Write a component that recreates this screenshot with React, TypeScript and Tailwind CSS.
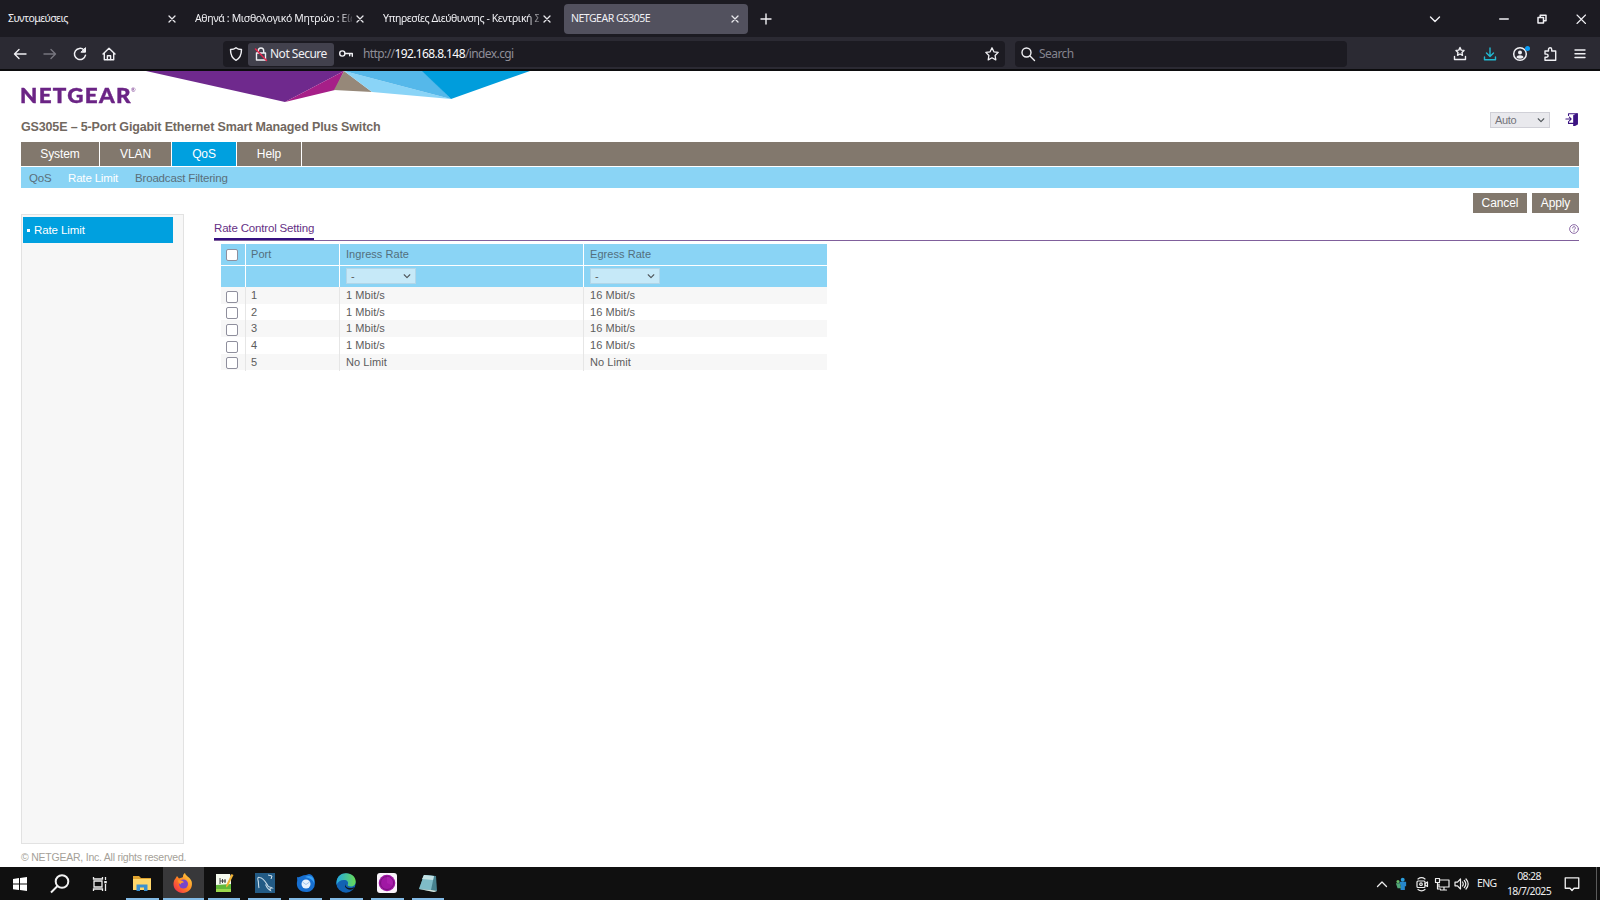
import type { ReactNode } from "react";

const ui = "font-['Noto_Sans','Open_Sans',sans-serif]";

function Icon({ size = 16, sw = 1.4, className = "", children }: { size?: number; sw?: number; className?: string; children: ReactNode }) {
  return (
    <svg width={size} height={size} viewBox="0 0 16 16" fill="none" stroke="currentColor" strokeWidth={sw} strokeLinecap="round" strokeLinejoin="round" className={`shrink-0 ${className}`}>
      {children}
    </svg>
  );
}

function Cross() {
  return (
    <Icon size={16} sw={1.3} className="text-[#e8e8ec]">
      <path d="M5 5l6 6M11 5l-6 6" />
    </Icon>
  );
}

function TabBar() {
  return (
    <div className={`flex h-[37px] shrink-0 items-center bg-[#1c1b22] text-[10.5px] text-[#f0f0f4] ${ui}`}>
      <div className="flex w-[187px] items-center pl-2">
        <span className="w-[156px] whitespace-nowrap tracking-[-0.5px]">Συντομεύσεις</span>
        <Cross />
      </div>
      <div className="flex w-[188px] items-center pl-2">
        <span className="w-[157px] whitespace-nowrap tracking-[-0.34px] [mask-image:linear-gradient(to_right,#000_92%,transparent_102%)]">Αθηνά : Μισθολογικό Μητρώο : Είς</span>
        <Cross />
      </div>
      <div className="flex w-[189px] items-center pl-2">
        <span className="w-[156px] whitespace-nowrap tracking-[-0.42px] [mask-image:linear-gradient(to_right,#000_92%,transparent_105%)]">Υπηρεσίες Διεύθυνσης - Κεντρική Σ</span>
        <Cross />
      </div>
      <div className="flex h-[30px] w-[184px] items-center justify-between rounded bg-[#52515e] pr-[5px] pl-[7px]">
        <span className="tracking-[-0.5px]">NETGEAR GS305E</span>
        <Cross />
      </div>
      <Icon className="ml-[10px]" sw={1.4}><path d="M3 8h10M8 3v10" /></Icon>
      <div className="ml-auto flex items-center pr-[11px]">
        <Icon className="mr-[53px]"><path d="M3.5 6l4.5 4.5L12.500 6" /></Icon>
        <Icon className="mr-[22px]" sw={1.3}><path d="M3.700 8h8.600" /></Icon>
        <Icon className="mr-[23px]" sw={1.5}><path d="M4 6.500h5.500v5.500H4z" /><path d="M6.200 6.300V4.300h5.800v5.500H9.700" /></Icon>
        <Icon sw={1.100}><path d="M4 4l8.500 8.500M12.500 4L4 12.500" /></Icon>
      </div>
    </div>
  );
}

function Toolbar() {
  return (
    <div className={`flex h-[34px] shrink-0 items-center border-b-2 border-[#0c0c0e] bg-[#2b2a33] pt-[2px] text-[#f0f0f4] ${ui}`}>
      <div className="flex w-[223px] items-center gap-[14px] pl-3">
        <Icon><path d="M14 8H2.500M7 3.500L2.500 8 7 12.500" /></Icon>
        <Icon className="text-[#77767f]"><path d="M2 8h11.500M9 3.500l4.500 4.500L9 12.500" /></Icon>
        <Icon sw={1.500}><path d="M13.500 9.200A5.600 5.600 0 1 1 12 4" /><path d="M13.500 2v4.200H9.300z" fill="currentColor" strokeWidth="1" /></Icon>
        <Icon sw={1.4} className="-ml-px"><path d="M2 8l6-5.800L14 8M3.300 7.200v6.600h9.400V7.200" /><path d="M6.400 13.500V9.800h3.200v3.700" /></Icon>
      </div>
      <div className="flex h-[26px] w-[782px] items-center rounded bg-[#1c1b22]">
        <Icon className="ml-[5px]"><path d="M8 1.700c1.500 1.300 3.600 1.800 5.500 1.800 0 5-1.300 8.700-5.500 10.800C3.800 12.200 2.500 8.500 2.500 3.500 4.400 3.500 6.500 3 8 1.700z" /></Icon>
        <div className="ml-1 flex h-[23px] w-[86px] items-center rounded-[3px] bg-[#42414d] pl-[5px]">
          <Icon className="mr-[1px]"><path d="M3.500 7h9v7h-9zM5.300 7V5a2.700 3 0 0 1 5.400 0v2" /><path d="M2.500 3l11 11.500" stroke="#e2264d" strokeWidth="1.500" /></Icon>
          <span className="text-[12px] tracking-[-0.5px] whitespace-nowrap">Not Secure</span>
        </div>
        <Icon className="ml-[4px]"><circle cx="4.300" cy="7.500" r="2.600" /><path d="M7 7.500h7.300v2.700M11.700 7.500v2.200" /></Icon>
        <span className="ml-[9px] text-[12px] tracking-[-0.6px] whitespace-nowrap text-[#8f8e98]">http://<span className="text-[#fbfbfe]">192.168.8.148</span>/index.cgi</span>
        <Icon className="mr-[5px] ml-auto" sw={1.300}><path d="M8 1.800l1.900 4 4.300.6-3.100 3.100.7 4.400L8 11.800l-3.800 2.100.7-4.400L1.800 6.400l4.300-.6z" /></Icon>
      </div>
      <div className="ml-[10px] flex h-[26px] w-[332px] items-center rounded bg-[#1c1b22] pl-[5px]">
        <Icon><circle cx="6.500" cy="6.500" r="4.500" /><path d="M10 10l4.500 4.500" /></Icon>
        <span className="ml-[3px] text-[12px] tracking-[-0.55px] text-[#85848e]">Search</span>
      </div>
      <div className="ml-auto flex items-center gap-[14px] pr-3">
        <Icon sw={1.400}><path d="M8 1.500l1.200 2.600 2.800.3-2 2 .5 2.900L8 8l-2.500 1.300.5-2.900-2-2 2.800-.3z" /><path d="M2.500 10.500v3h11v-3" /></Icon>
        <Icon className="text-[#22b9d2]"><path d="M8 2v8.500M4.500 7L8 10.500 11.500 7M2.500 11v2.800h11V11" /></Icon>
        <div className="relative">
          <Icon sw={1.500}><circle cx="8" cy="8" r="6.300" /><circle cx="8" cy="6.400" r="2" fill="currentColor" stroke="none" /><path d="M4.500 11.500c0-3 7-3 7 0-1.700 1.600-5.300 1.600-7 0z" fill="currentColor" stroke="none" /></Icon>
          <span className="absolute top-0 right-[-2px] size-[5px] rounded-full bg-[#0a9cf5]" />
        </div>
        <Icon sw={1.400}><path d="M3 5h3.500V3.300a1.600 1.600 0 0 1 3.200 0V5h4v9.300H3v-3h1.500a1.500 1.500 0 0 0 0-3.200H3z" /></Icon>
        <Icon sw={1.400}><path d="M3 4h10M3 7.800h10M3 11.500h10" /></Icon>
      </div>
    </div>
  );
}

function Select({ label, className }: { label: string; className: string }) {
  return (
    <div className={`flex items-center justify-between border ${className}`}>
      <span>{label}</span>
      <Icon size={10} sw={1.700} className="text-[#4e5458]"><path d="M3.500 6L8 10.500 12.500 6" /></Icon>
    </div>
  );
}

function Check() {
  return <span className="block size-[12px] rounded-[2px] border border-[#8f8f9d] bg-white" />;
}

function Header() {
  return (
    <header className="relative h-[71px] shrink-0">
      <svg width="390" height="34" viewBox="145 71 390 34" className="absolute top-0 left-[145px]">
        <path d="M146 71h198l-59 31z" fill="#6f298d" />
        <path d="M344 71l-9 19-50 12z" fill="#a61f88" />
        <path d="M344 71l-10 19 38 2z" fill="#968879" />
        <path d="M344 71l28 21 79 7z" fill="#8ad4f7" />
        <path d="M344 71h79l28 28z" fill="#55b8ea" />
        <path d="M422 71h108l-79 28z" fill="#009ddc" />
      </svg>
      <div className="flex h-full justify-between pr-[21px] pl-[21px]">
        <div>
          <div className="-ml-px flex h-[20px] origin-left scale-x-[1.12] pt-[14px] font-['Lato',sans-serif] text-[20px] leading-[20px] font-black tracking-[1.200px] text-[#6b2485] [-webkit-text-stroke:0.4px_#6b2485]">
            NETGEAR<span className="-ml-px text-[5px] leading-[10px] font-normal [-webkit-text-stroke:0]">®</span>
          </div>
          <h1 className="mt-[28px] text-[12.5px] leading-4 font-bold tracking-[-0.15px] whitespace-nowrap text-[#71685f]">GS305E – 5-Port Gigabit Ethernet Smart Managed Plus Switch</h1>
        </div>
        <div className="flex items-start pt-[41px]">
          <Select label="Auto" className="h-[16px] w-[60px] border-[#d0d0d7] bg-[#e9e9ed] pr-[3px] pl-1 text-[11px] tracking-[-0.3px] text-[#74747a]" />
          <Icon size={14} sw={1.200} className="ml-[15px] text-[#3c1482]"><path d="M1 8h6M5 5.800L7.200 8 5 10.200M4 4V2h10v11H4v-2" /><path d="M10 4l4-2v12l-4 2z" fill="currentColor" /></Icon>
        </div>
      </div>
    </header>
  );
}

const ports = [
  ["1", "1 Mbit/s", "16 Mbit/s"],
  ["2", "1 Mbit/s", "16 Mbit/s"],
  ["3", "1 Mbit/s", "16 Mbit/s"],
  ["4", "1 Mbit/s", "16 Mbit/s"],
  ["5", "No Limit", "No Limit"],
];

function PortTable() {
  const cols = "grid grid-cols-[25px_94px_244px_243px]";
  return (
    <div className="mt-[3px] ml-[7px] w-[606px] text-[11px] tracking-[0.05px] text-[#5c5c5c]">
      <div className={`${cols} h-[22px] border-b border-white bg-[#8ad4f5] leading-[21px] text-[#536f7d]`}>
        <div className="flex items-center border-r border-white pt-px pl-[5px]"><Check /></div>
        <div className="border-r border-white pl-[5px]">Port</div>
        <div className="border-r border-white pl-[6px]">Ingress Rate</div>
        <div className="pl-[6px]">Egress Rate</div>
      </div>
      <div className={`${cols} h-[21px] bg-[#8ad4f5]`}>
        <div className="border-r border-white" />
        <div className="border-r border-white" />
        <div className="flex items-center border-r border-white pb-px pl-[6px]"><Select label="-" className="h-[16px] w-[70px] border-[#b2d6e8] bg-[#c6e9f8] pr-[3px] pl-1" /></div>
        <div className="flex items-center pb-px pl-[6px]"><Select label="-" className="h-[16px] w-[70px] border-[#b2d6e8] bg-[#c6e9f8] pr-[3px] pl-1" /></div>
      </div>
      {ports.map(([port, ingress, egress]) => (
        <div key={port} className={`${cols} h-[16.700px] leading-[17px] odd:bg-[#f7f7f7]`}>
          <div className="flex items-start border-r border-[#e6e6e6] pt-[3.500px] pl-[5px]"><Check /></div>
          <div className="border-r border-[#e6e6e6] pl-[5px]">{port}</div>
          <div className="border-r border-[#e6e6e6] pl-[6px]">{ingress}</div>
          <div className="pl-[6px]">{egress}</div>
        </div>
      ))}
    </div>
  );
}

function SwitchPage() {
  return (
    <div className="flex h-[796px] shrink-0 flex-col bg-white font-['Liberation_Sans',Arial,sans-serif]">
      <Header />
      <nav className="mx-[21px] flex h-[24px] shrink-0 bg-[#82786d] text-[12px] leading-[24px] tracking-[-0.1px] text-white">
        <div className="w-[79px] border-r border-white text-center">System</div>
        <div className="w-[72px] border-r border-white text-center">VLAN</div>
        <div className="w-[65px] border-r border-white bg-[#00a0df] text-center">QoS</div>
        <div className="w-[65px] border-r border-white text-center">Help</div>
      </nav>
      <div className="mx-[21px] mt-px flex h-[21px] shrink-0 items-center bg-[#8ad4f5] pt-[2px] pl-2 text-[11.500px] tracking-[-0.170px] whitespace-nowrap text-[#5a6f7a]">
        <span className="w-[39px]">QoS</span>
        <span className="w-[67px] text-white">Rate Limit</span>
        <span>Broadcast Filtering</span>
      </div>
      <div className="mt-[5px] mr-[21px] flex h-[20px] shrink-0 justify-end gap-[5px] text-center text-[12px] leading-[20px] tracking-[-0.1px] text-white">
        <div className="w-[54px] bg-[#82786d]">Cancel</div>
        <div className="w-[47px] bg-[#82786d]">Apply</div>
      </div>
      <div className="mx-[21px] mt-px flex h-[630px] shrink-0">
        <aside className="w-[163px] border border-[#e2e2e2] bg-[#f7f7f7] pt-[2px] pl-[1px]">
          <div className="flex h-[26px] w-[150px] items-center bg-[#00a0df] pt-px pl-[4px] text-[11.500px] tracking-[-0.1px] text-white">
            <span className="mr-[4px] size-[3px] bg-white" />Rate Limit
          </div>
        </aside>
        <main className="ml-[30px] flex-1 pt-[4px]">
          <div className="flex h-[23px] items-start justify-between border-b border-[#80609c]">
            <h2 className="h-[22px] w-[100px] border-b-2 border-[#35107f] text-[11.500px] leading-[21px] tracking-[-0.17px] whitespace-nowrap text-[#663085]">Rate Control Setting</h2>
            <Icon size={10} sw={1.300} className="mt-[6px] text-[#754d94]"><circle cx="8" cy="8" r="7" /><path d="M5.800 6.300a2.200 2.200 0 1 1 3.300 1.900c-.8.500-1.100.8-1.100 1.600M8 11.800v.2" /></Icon>
          </div>
          <PortTable />
        </main>
      </div>
      <footer className="mt-[6px] ml-[21px] text-[10.500px] leading-[14px] tracking-[-0.230px] text-[#a59f98]">© NETGEAR, Inc. All rights reserved.</footer>
    </div>
  );
}

function TaskButton({ active = false, children }: { active?: boolean; children: ReactNode }) {
  return (
    <div className={active ? "flex h-full w-[40.800px] flex-col items-center bg-[#38383a]" : "flex h-full w-[40.800px] flex-col items-center px-[4px]"}>
      <div className="flex flex-1 items-center">
        <svg width="20" height="20" viewBox="0 0 20 20">{children}</svg>
      </div>
      <div className="h-[2px] w-full bg-[#83bbe6]" />
    </div>
  );
}

function Taskbar() {
  return (
    <div className={`flex h-[33px] shrink-0 items-center bg-[#101010] text-[#eeeeee] ${ui}`}>
      <div className="flex h-full w-[122px] items-center pl-[11px]">
        <svg width="18" height="18" viewBox="0 0 18 18" fill="#fff"><path d="M2 4l6-1v5.500H2zM9 2.900L16 2v6.500H9zM2 9.500h6V15l-6-.8zM9 9.500h7V16l-7-.9z" /></svg>
        <svg width="22" height="22" viewBox="0 0 22 22" className="ml-[20px]" fill="none" stroke="#f2f2f2" strokeWidth="2"><circle cx="13" cy="8.500" r="6.300" /><path d="M8.500 13L2 19.500" /></svg>
        <svg width="18" height="18" viewBox="0 0 18 18" className="ml-[20px]" fill="none" stroke="#eee" strokeWidth="1.300"><path d="M3 6h8v6H3zM2.500 2v2h9V2M2.500 16v-2h9v2M14.500 2v3M14.500 9v7" /><path d="M13.200 6h2.600v2.300h-2.600z" fill="#eee" stroke="none" /></svg>
      </div>
      <TaskButton>
        <path d="M1 3h6l2 2h10v12H1z" fill="#dfa32f" /><path d="M1 6h18v11H1z" fill="#ffd76b" /><path d="M4.500 18v-6.500h11V18h-3.500v-3.500H8V18z" fill="#3c91d0" />
      </TaskButton>
      <TaskButton active>
        <defs><linearGradient id="fox" x1="1" y1="0" x2="0" y2="1"><stop stopColor="#ffe14a" /><stop offset=".5" stopColor="#ff8420" /><stop offset="1" stopColor="#f21c56" /></linearGradient></defs>
        <path d="M4 3l2 2.500C8 4.500 9 5 10 4c-.2-2 1-3.500 2-4 .5 3 5 4 6.500 8 2 7-3 12-8.500 12C3 20-1 14 1 8c.5-1.500 1-2 1.500-2.500z" fill="url(#fox)" />
        <circle cx="10.500" cy="11" r="4.500" fill="#7745cc" /><path d="M5 7.500c3-.5 5 .5 6 2-2-.2-3 .5-3.500 2-1-.8-2.500-2-2.500-4z" fill="#ff982d" />
      </TaskButton>
      <TaskButton>
        <path d="M2 1h14l1 3v15H2z" fill="#f5faee" /><path d="M2 12l15-1v8H2z" fill="#62b83a" /><path d="M2 16h15v3H2z" fill="#9cd84e" /><path d="M6 5v6M6 8h6M8.500 6v4M11 6v4" stroke="#444" fill="none" /><path d="M17.500 1l2 1-5.500 11-2 1.500.3-2.800z" fill="#f1b336" />
      </TaskButton>
      <TaskButton>
        <path d="M0 0h20v20H0z" fill="#235b85" /><path d="M4 15c-1-3 0-5-1-8-.5-2 0-3 1.500-2.500C9 5 11 10 13 13c1 1.500 2.500 1 4 2-2 0-2.500.5-1.500 2.500-3-1-4-4-5-6" fill="none" stroke="#c6dae7" strokeWidth="1.100" /><path d="M13 2l4 1-1 3" stroke="#d8e6ef" fill="none" />
      </TaskButton>
      <TaskButton>
        <path d="M1 4c3 1 5-2 9-2l3-1c3 0 6 4 6 9a8 9 0 0 1-9 9C4 19 0 15 1 9c.5-2 0-3 0-5z" fill="#176fd0" /><path d="M9 4c6-3 10 1 9 6-1-3-4-5-9-6z" fill="#39a2f5" /><circle cx="10" cy="11" r="4.500" fill="#e6f1fd" /><path d="M6.500 9l3.500 2.500L13.500 9" stroke="#9cc5ef" fill="none" />
      </TaskButton>
      <TaskButton>
        <defs><linearGradient id="edge"><stop stopColor="#23a8e2" /><stop offset="1" stopColor="#68db55" /></linearGradient></defs>
        <circle cx="10" cy="10" r="9.700" fill="#1262b3" /><path d="M.5 9C1 3.500 5 .3 10 .3c6 0 9.700 4 9.700 8.200 0 3-2 5-5 5-2 0-3.500-1-3-2 .8-1 .7-4-2.700-4.500C5.500 6.500 2 8 .5 12z" fill="url(#edge)" /><path d="M9 10.500c0 4 4 5.500 8.500 4 .8-.3 1.500-.2 1 .5-3 3-8.500 1.500-9.500-1.500z" fill="#101820" />
      </TaskButton>
      <TaskButton>
        <rect width="20" height="20" rx="3" fill="#faf4fb" /><circle cx="10" cy="10" r="8.300" fill="#a018a4" /><circle cx="10" cy="10" r="6.500" fill="none" stroke="#7a127f" /><path d="M10 10V3.500a6.500 6.500 0 0 1 5.500 9z" fill="#ab20ae" />
      </TaskButton>
      <TaskButton>
        <path d="M6 2l12 1 1 15-3 1L1 16z" fill="#47828f" /><path d="M6 2l10 1-3 14-12-1z" fill="#7fbcc8" /><path d="M6 2l10 1-1 4-11-1z" fill="#c3e2e4" /><path d="M1 16l12 1 6 1-3 1z" fill="#dce5dd" />
      </TaskButton>
      <div className="ml-auto flex h-full items-center">
        <Icon size={16} sw={1.300} className="mr-[5px]"><path d="M3.500 10.500L8 6l4.500 4.500" /></Icon>
        <svg width="12" height="14" viewBox="0 0 14 16"><circle cx="9" cy="3" r="2.300" fill="#2c9edc" /><path d="M5 5.500h8v5h-1.500V15h-5v-5z" fill="#2686cb" /><circle cx="3.500" cy="5" r="1.800" fill="#69bc69" /><path d="M1 7h5l1 6H3z" fill="#50a778" /></svg>
        <Icon size={16} sw={1.200} className="ml-[7px]"><rect x="3" y="5" width="8" height="6.500" rx="1" /><circle cx="7" cy="8.200" r="1.300" /><path d="M11 7.500l2.500-1.500v4.500L11 9M4 3c2-1.500 5-1.500 7 0M4 13.500c2 1.500 5 1.500 7 0" /></Icon>
        <Icon size={16} sw={1.200} className="ml-[4px]"><path d="M6 4h9v7H5V8M10 11v2.500M6.500 14h6M1.500 2.500h4v4h-4zM3.500 6.500v6.500h3" /></Icon>
        <Icon size={16} sw={1.200} className="ml-[3px]"><path d="M2 6.200h2.500L7.500 3v10l-3-3.200H2zM9.500 6c1 1.300 1 2.700 0 4M11.300 4.500c1.900 2.200 1.900 4.800 0 7M13 3c2.600 3 2.600 7 0 10" /></Icon>
        <span className="ml-[8px] w-[20px] text-[10.500px] tracking-[-0.600px]">ENG</span>
        <div className="mr-px ml-[5px] flex w-[54px] flex-col items-center text-[10.500px] leading-[15px] tracking-[-0.650px] whitespace-nowrap"><span>08:28</span><span>18/7/2025</span></div>
        <Icon size={18} sw={1.200} className="mr-[15px] ml-[6px]"><path d="M2 2.500h12v9.300h-4.200L8 13.800l-1.800-2H2z" /></Icon>
        <div className="mr-[3px] h-full w-px bg-[#5a5a5a]" />
      </div>
    </div>
  );
}

export default function App() {
  return (
    <div className="flex h-[900px] w-[1600px] flex-col overflow-hidden bg-white">
      <TabBar />
      <Toolbar />
      <SwitchPage />
      <Taskbar />
    </div>
  );
}
